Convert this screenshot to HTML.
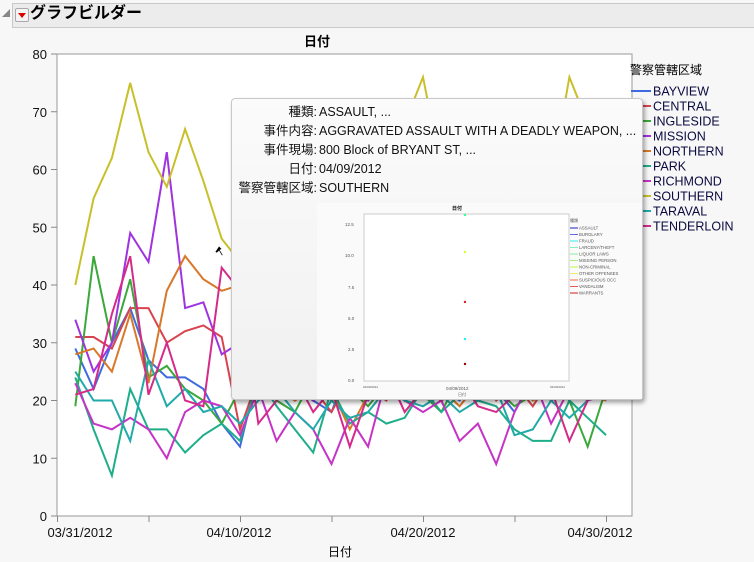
<!DOCTYPE html>
<html><head><meta charset="utf-8"><style>
body{margin:0;width:754px;height:562px;background:#f7f7f7;font-family:"Liberation Sans","Noto Sans CJK JP",sans-serif;overflow:hidden;position:relative}
.hdr{position:absolute;left:12px;top:3px;width:742px;height:23px;background:#ececec;border:1px solid #c8c8c8;border-right:none}
.ttl{position:absolute;left:30px;top:4px;font-size:16px;font-weight:bold;color:#000;line-height:20px}
.tri{position:absolute;left:2px;top:9px;width:0;height:0;border-left:8px solid transparent;border-bottom:8px solid #888}
.btn{position:absolute;left:15px;top:8px;width:12px;height:12px;border:1px solid #aaa;background:#f4f4f4;border-radius:2px}
.btn:after{content:"";position:absolute;left:2px;top:4px;border-left:4px solid transparent;border-right:4px solid transparent;border-top:5px solid #d00}
.tip{position:absolute;left:231px;top:98px;width:410px;height:300px;background:linear-gradient(#fbfbfb,#f0f0f0);border:1px solid #c8c8c8;border-radius:4px;box-shadow:2px 3px 4px rgba(0,0,0,.35)}
.tip .r,.tip .k{position:absolute;font-size:12.5px;line-height:18px;height:18px;color:#111;white-space:nowrap}
.tip .k{right:325px;text-align:right}
.tip .r{left:87px}
</style></head><body>
<div class="tri"></div><div class="hdr"></div><div class="btn"></div><div class="ttl">グラフビルダー</div>
<svg id="s" width="754" height="562" style="position:absolute;left:0;top:0">
<text x="317" y="46" font-size="13" font-weight="bold" text-anchor="middle" font-family="Liberation Sans,Noto Sans CJK JP,sans-serif">日付</text>
<rect x="57" y="54" width="575" height="462" fill="#fff" stroke="#9a9a9a"/>
<g id="ax" font-size="13" fill="#111" font-family="Liberation Sans,sans-serif"></g>
<g id="ln" fill="none" stroke-width="2" stroke-linejoin="miter"></g>
<text x="340" y="556" font-size="12" text-anchor="middle" font-family="Liberation Sans,Noto Sans CJK JP,sans-serif">日付</text>
<text x="630" y="74" font-size="12" font-family="Liberation Sans,Noto Sans CJK JP,sans-serif">警察管轄区域</text>
<g id="lg" font-size="12.5" font-family="Liberation Sans,sans-serif"></g>
<path d="M215 252 l4 -6 l3 3 l-2 1 l3 5 l-1 1 l-3 -5 l-2 2 z" fill="#000" stroke="#fff" stroke-width="0.6"/>
</svg>
<div class="tip">
<div class="k" style="top:4px">種類:</div><div class="r" style="top:4px">ASSAULT, ...</div>
<div class="k" style="top:23px">事件内容:</div><div class="r" style="top:23px">AGGRAVATED ASSAULT WITH A DEADLY WEAPON, ...</div>
<div class="k" style="top:42px">事件現場:</div><div class="r" style="top:42px">800 Block of BRYANT ST, ...</div>
<div class="k" style="top:61px">日付:</div><div class="r" style="top:61px">04/09/2012</div>
<div class="k" style="top:80px">警察管轄区域:</div><div class="r" style="top:80px">SOUTHERN</div>
<svg width="410" height="300" style="position:absolute;left:0;top:0" font-family="Liberation Sans,Noto Sans CJK JP,sans-serif">
<rect x="85" y="104" width="325" height="198" fill="#fafafa"/>
<rect x="132" y="115" width="205" height="167" fill="#fff" stroke="#ccc"/>
<text x="220" y="111" font-size="5" font-weight="bold">日付</text>
<g font-size="4.5" fill="#555">
<text x="113" y="127">12.5</text><text x="113" y="158">10.0</text><text x="116" y="190">7.5</text><text x="116" y="221">5.0</text><text x="116" y="252">2.5</text><text x="116" y="283">0.0</text>
<text x="131" y="289" font-size="3">04/09/2012</text><text x="214" y="291">04/09/2012</text><text x="318" y="289" font-size="3">04/09/2012</text><text x="226" y="297" font-size="4">日付</text>
<text x="338" y="123" font-size="4">種類</text></g>
<circle cx="233" cy="116" r="1.2" fill="#3f9"/><circle cx="233" cy="153" r="1.2" fill="#cf3"/><circle cx="233" cy="203" r="1.2" fill="#d22"/><circle cx="233" cy="240" r="1.2" fill="#2ee"/><circle cx="233" cy="265" r="1.2" fill="#900"/>
<g id="tl" font-size="4.3" fill="#555"></g>
</svg>
</div>
<script>
var Y=v=>516-v*5.775, X=i=>75.3+i*18.3;
var ax=document.getElementById('ax'),h='';
for(var v=0;v<=80;v+=10){h+='<text x="47" y="'+(Y(v)+5)+'" text-anchor="end">'+v+'</text><line x1="51" x2="57" y1="'+Y(v)+'" y2="'+Y(v)+'" stroke="#888"/>';}
var dl=['03/31/2012','04/10/2012','04/20/2012','04/30/2012'],lx=[80,239,423,600];
for(var k=0;k<7;k++){var x=57.5+k*91.5;h+='<line x1="'+x+'" x2="'+x+'" y1="516" y2="522" stroke="#888"/>';if(k%2==0)h+='<text x="'+lx[k/2]+'" y="537" text-anchor="middle">'+dl[k/2]+'</text>';}
ax.innerHTML=h;
var S=[
['BAYVIEW','#3e6be0',[29,22,30,36,27,24,24,22,16,12,25,24,22,20,18,26,22,28,20,24,22,20,25,22,18,24,20,22,26,20]],
['CENTRAL','#d9434e',[31,31,29,36,36,30,32,33,31,15,24,26,20,22,18,24,22,20,26,24,20,22,25,20,23,19,24,21,22,20]],
['INGLESIDE','#3aa83a',[19,45,30,41,24,26,22,20,16,22,26,20,18,24,20,22,19,23,25,21,18,24,20,22,19,21,23,20,12,22]],
['MISSION','#a033e0',[34,25,30,49,44,63,36,37,28,30,26,22,24,20,25,22,20,24,22,26,21,23,20,24,22,25,20,22,24,21]],
['NORTHERN','#d8782a',[28,29,25,35,23,39,45,41,39,40,24,22,20,25,22,15,21,23,20,24,22,19,23,21,24,20,22,23,21,20]],
['PARK','#1fae8a',[24,15,7,22,15,15,11,14,16,13,24,19,15,11,22,16,18,16,17,22,18,21,20,19,15,13,13,20,17,14]],
['RICHMOND','#c633c6',[23,16,15,17,15,10,18,20,19,14,22,13,18,15,9,17,12,24,20,18,20,13,16,9,18,24,16,22,20,21]],
['SOUTHERN','#c8c02a',[40,55,62,75,63,57,67,58,48,44,50,55,60,58,62,65,70,66,68,76,60,65,70,62,66,60,58,76,68,62]],
['TARAVAL','#20aaaa',[25,20,20,13,27,19,22,18,19,16,20,22,18,15,20,17,18,22,20,19,21,18,20,22,14,15,20,17,20,22]],
['TENDERLOIN','#d62a8a',[21,22,35,45,21,30,20,19,43,39,16,20,24,18,22,12,21,25,18,22,20,24,19,18,21,23,22,13,20,24]]];
var ln='',lg='';
S.forEach(function(s,j){ln+='<polyline stroke="'+s[1]+'" points="'+s[2].map((v,i)=>X(i)+','+Y(v)).join(' ')+'"/>';
var y=91+j*15;lg+='<line x1="631" x2="651" y1="'+y+'" y2="'+y+'" stroke="'+s[1]+'" stroke-width="2"/><text x="653" y="'+(y+4.5)+'" fill="#0a0a40">'+s[0]+'</text>';});
document.getElementById('ln').innerHTML=ln;document.getElementById('lg').innerHTML=lg;
var tn=['ASSAULT','BURGLARY','FRAUD','LARCENY/THEFT','LIQUOR LAWS','MISSING PERSON','NON-CRIMINAL','OTHER OFFENSES','SUSPICIOUS OCC','VANDALISM','WARRANTS'],tc=['#22b','#66e','#3ee','#8eb','#8e9','#ae8','#bf4','#ee6','#f64','#e55','#c22'],t='';
tn.forEach((n,i)=>{var y=129+i*6.5;t+='<line x1="338" x2="346" y1="'+y+'" y2="'+y+'" stroke="'+tc[i]+'"/><text x="347" y="'+(y+1.5)+'">'+n+'</text>';});
document.getElementById('tl').innerHTML=t;
</script>
</body></html>
